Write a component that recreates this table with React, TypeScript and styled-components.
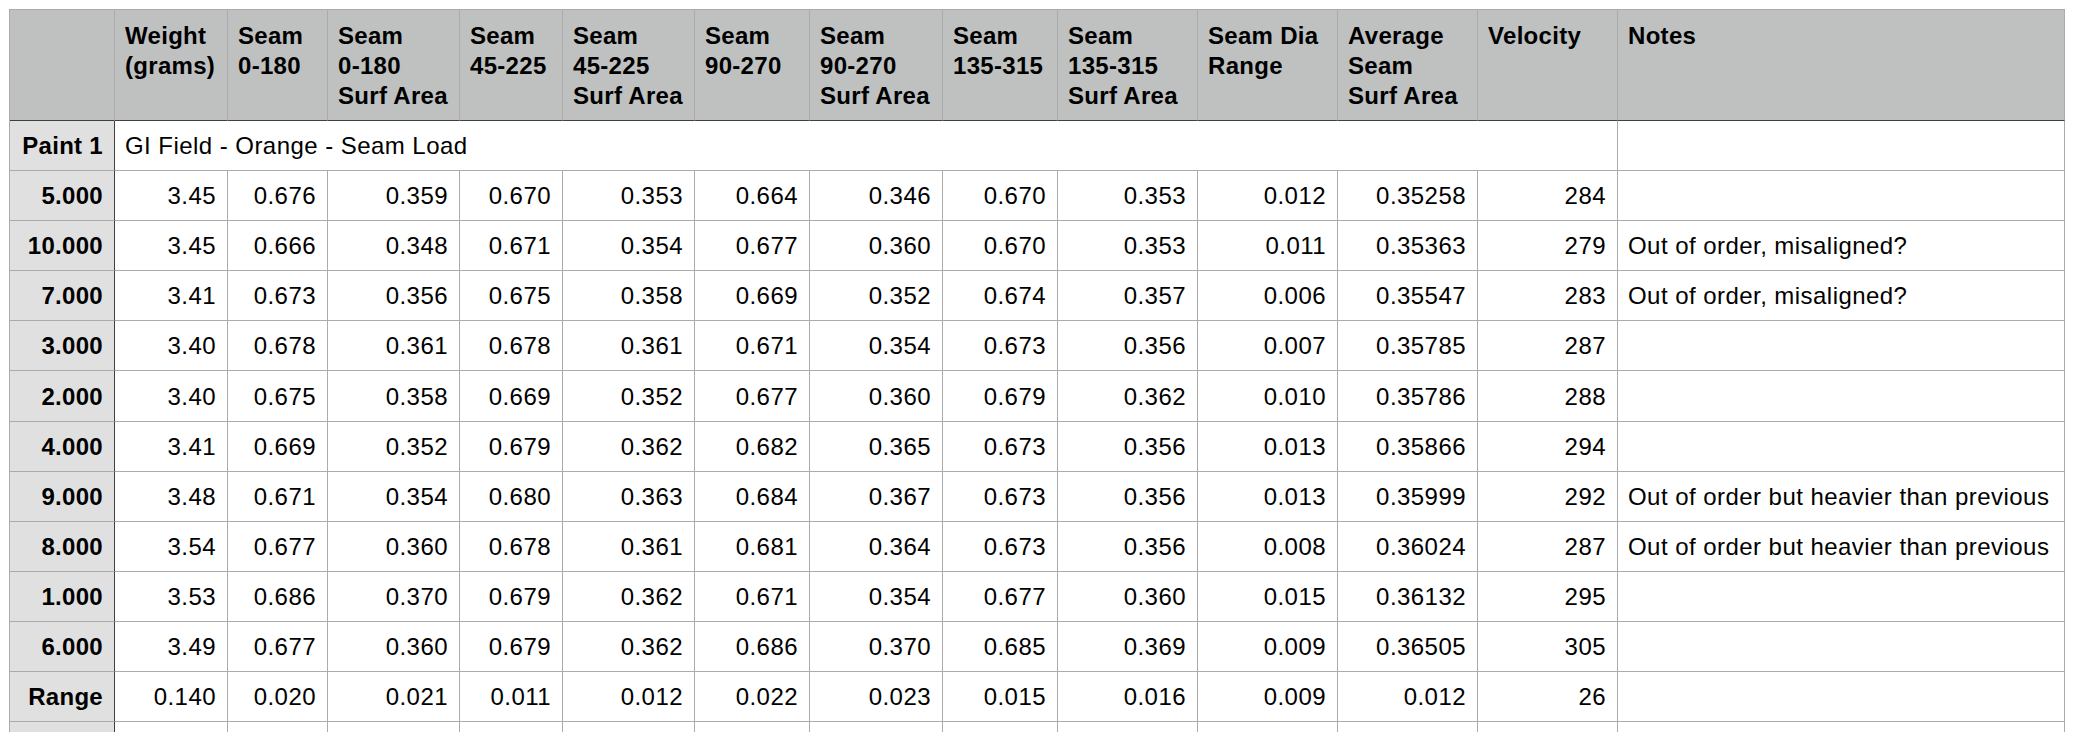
import React from "react";
import styled, { createGlobalStyle } from "styled-components";

const GlobalStyle = createGlobalStyle`
  html, body {
    margin: 0;
    padding: 0;
    background: #ffffff;
  }
  body {
    font-family: "Liberation Sans", Arial, Helvetica, sans-serif;
    color: #000;
  }
`;

const GRID = "#ababab";
const DARK = "#3f3f3f";

// border-to-border widths measured from the sheet
const columnWidths = [105, 113, 100, 132, 103, 132, 115, 133, 115, 140, 140, 140, 140, 447];

const Page = styled.div`
  padding: 9px 0 0 9px;
`;

const Sheet = styled.div`
  display: grid;
  grid-template-columns: ${columnWidths.map((w) => `${w}px`).join(" ")};
  grid-template-rows: 111px;
  grid-auto-rows: 50.1px;
  width: max-content;
  border-top: 1px solid ${GRID};
  border-left: 1px solid ${GRID};
  font-size: 24px;
  letter-spacing: 0.45px;
`;

const Cell = styled.div`
  box-sizing: border-box;
  border-right: 1px solid ${GRID};
  border-bottom: 1px solid ${GRID};
  background: #ffffff;
  display: flex;
  align-items: center;
  padding: 1px 11px 0 10px;
  white-space: nowrap;
  overflow: hidden;
`;

const HeadCell = styled(Cell)`
  background: #bfc1c0;
  border-bottom-color: ${DARK};
  align-items: flex-start;
  flex-direction: column;
  padding-top: 11px;
  font-weight: bold;
  letter-spacing: 0.3px;
  line-height: 30px;
`;

const RowHead = styled(Cell)`
  background: #e0e0e0;
  border-right-color: ${DARK};
  justify-content: flex-end;
  font-weight: bold;
  letter-spacing: 0.3px;
`;

const NumCell = styled(Cell)`
  justify-content: flex-end;
`;

const SpanCell = styled(Cell)<{ $span: number }>`
  grid-column: span ${(p) => p.$span};
`;

const headers: string[][] = [
  [],
  ["Weight", "(grams)"],
  ["Seam", "0-180"],
  ["Seam", "0-180", "Surf Area"],
  ["Seam", "45-225"],
  ["Seam", "45-225", "Surf Area"],
  ["Seam", "90-270"],
  ["Seam", "90-270", "Surf Area"],
  ["Seam", "135-315"],
  ["Seam", "135-315", "Surf Area"],
  ["Seam Dia", "Range"],
  ["Average", "Seam", "Surf Area"],
  ["Velocity"],
  ["Notes"],
];

interface IRow {
  label: string;
  values: string[];
  note?: string;
}

const ORDER = "Out of order, misaligned?";
const HEAVY = "Out of order but heavier than previous";

const rows: IRow[] = [
  { label: "5.000", values: ["3.45", "0.676", "0.359", "0.670", "0.353", "0.664", "0.346", "0.670", "0.353", "0.012", "0.35258", "284"] },
  { label: "10.000", values: ["3.45", "0.666", "0.348", "0.671", "0.354", "0.677", "0.360", "0.670", "0.353", "0.011", "0.35363", "279"], note: ORDER },
  { label: "7.000", values: ["3.41", "0.673", "0.356", "0.675", "0.358", "0.669", "0.352", "0.674", "0.357", "0.006", "0.35547", "283"], note: ORDER },
  { label: "3.000", values: ["3.40", "0.678", "0.361", "0.678", "0.361", "0.671", "0.354", "0.673", "0.356", "0.007", "0.35785", "287"] },
  { label: "2.000", values: ["3.40", "0.675", "0.358", "0.669", "0.352", "0.677", "0.360", "0.679", "0.362", "0.010", "0.35786", "288"] },
  { label: "4.000", values: ["3.41", "0.669", "0.352", "0.679", "0.362", "0.682", "0.365", "0.673", "0.356", "0.013", "0.35866", "294"] },
  { label: "9.000", values: ["3.48", "0.671", "0.354", "0.680", "0.363", "0.684", "0.367", "0.673", "0.356", "0.013", "0.35999", "292"], note: HEAVY },
  { label: "8.000", values: ["3.54", "0.677", "0.360", "0.678", "0.361", "0.681", "0.364", "0.673", "0.356", "0.008", "0.36024", "287"], note: HEAVY },
  { label: "1.000", values: ["3.53", "0.686", "0.370", "0.679", "0.362", "0.671", "0.354", "0.677", "0.360", "0.015", "0.36132", "295"] },
  { label: "6.000", values: ["3.49", "0.677", "0.360", "0.679", "0.362", "0.686", "0.370", "0.685", "0.369", "0.009", "0.36505", "305"] },
  { label: "Range", values: ["0.140", "0.020", "0.021", "0.011", "0.012", "0.022", "0.023", "0.015", "0.016", "0.009", "0.012", "26"] },
];

const DataRow = ({ label, values, note }: IRow) => (
  <React.Fragment>
    <RowHead>{label}</RowHead>
    {values.map((v, i) => (
      <NumCell key={i}>{v}</NumCell>
    ))}
    <Cell>{note}</Cell>
  </React.Fragment>
);

export default function App() {
  return (
    <Page>
      <GlobalStyle />
      <Sheet>
        {headers.map((lines, i) => (
          <HeadCell key={i}>
            {lines.map((line) => (
              <span key={line}>{line}</span>
            ))}
          </HeadCell>
        ))}

        <RowHead>Paint 1</RowHead>
        <SpanCell $span={12}>GI Field - Orange - Seam Load</SpanCell>
        <Cell />

        {rows.map((row) => (
          <DataRow key={row.label} {...row} />
        ))}

        <RowHead />
        {columnWidths.slice(1).map((_, i) => (
          <Cell key={i} />
        ))}
      </Sheet>
    </Page>
  );
}
